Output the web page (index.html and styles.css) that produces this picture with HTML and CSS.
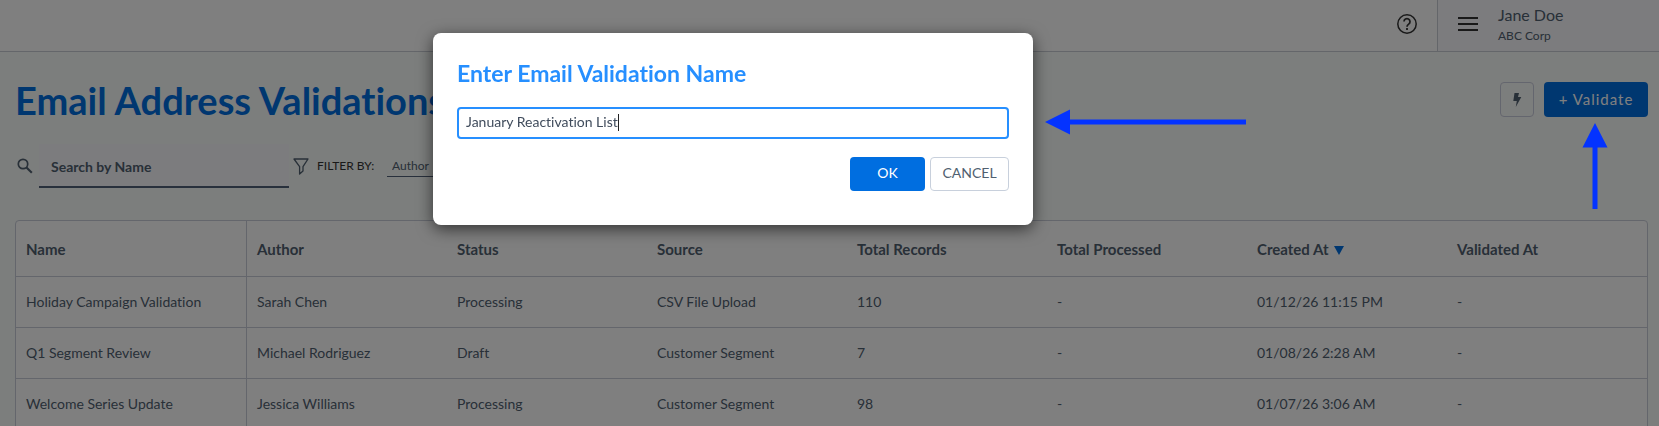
FILE: index.html
```html
<!DOCTYPE html>
<html lang="en">
<head>
	<meta charset="UTF-8">
	<meta name="viewport" content="width=device-width, initial-scale=1.0">
	<title>Email Address Validations</title>
	<link rel="stylesheet" href="styles.css">
</head>
<body>
	<header class="topbar">
		<button class="icon-btn help" type="button" aria-label="Help">
			<svg width="22" height="22" viewBox="0 0 22 22" fill="none" stroke="currentColor">
				<circle cx="11" cy="11" r="9.200" stroke-width="1.500"/>
				<path d="M8 8.600a3 3 0 1 1 4.700 2.500c-1.100.8-1.700 1.300-1.700 2.600" stroke-width="1.700"/>
				<path d="M11 15v2" stroke-width="1.800"/>
			</svg>
		</button>
		<div class="account">
			<button class="icon-btn menu" type="button" aria-label="Menu">
				<svg width="20" height="14" viewBox="0 0 20 14" fill="currentColor">
					<path d="M0 0h20v2H0zM0 6h20v2H0zM0 12h20v2H0z"/>
				</svg>
			</button>
			<div class="who">
				<div class="user">Jane Doe</div>
				<div class="company">ABC Corp</div>
			</div>
		</div>
	</header>

	<main class="content">
		<div class="heading">
			<h1>Email Address Validations</h1>
			<div class="actions">
				<button class="bolt" type="button" aria-label="Quick actions">
					<svg width="10" height="16" viewBox="0 0 10 16" fill="currentColor">
						<path d="M2.500 1H7L6 5H9.300L3.800 15 4.800 9H1.300z"/>
					</svg>
				</button>
				<button class="validate" type="button">+ Validate</button>
			</div>
		</div>

		<div class="filters">
			<label class="search-icon" for="search" aria-label="Search by Name">
				<svg width="16" height="16" viewBox="0 0 16 16" fill="none" stroke="currentColor">
					<circle cx="6" cy="6" r="4.700" stroke-width="1.700"/>
					<path d="M9.500 9.500l5.300 5.300" stroke-width="2.100"/>
				</svg>
			</label>
			<input class="search" id="search" type="text" placeholder="Search by Name">
			<svg class="funnel" width="16" height="17" viewBox="0 0 16 17" fill="none" stroke="currentColor">
				<path d="M1 1h14L10 8.600V13l-3.400 3V8.600z" stroke-width="1.300" stroke-linejoin="round"/>
			</svg>
			<label class="filter-label" for="filter">FILTER BY:</label>
			<select class="filter" id="filter">
				<option>Author</option>
			</select>
		</div>

		<div class="table-wrap">
			<table>
				<thead>
					<tr>
						<th>Name</th>
						<th>Author</th>
						<th>Status</th>
						<th>Source</th>
						<th>Total Records</th>
						<th>Total Processed</th>
						<th>Created At <svg class="sort" width="10" height="9" viewBox="0 0 10 9"><path d="M0 0h10L5 9z" fill="currentColor"/></svg></th>
						<th>Validated At</th>
					</tr>
				</thead>
				<tbody>
					<tr>
						<td>Holiday Campaign Validation</td>
						<td>Sarah Chen</td>
						<td>Processing</td>
						<td>CSV File Upload</td>
						<td>110</td>
						<td>-</td>
						<td>01/12/26 11:15 PM</td>
						<td>-</td>
					</tr>
					<tr>
						<td>Q1 Segment Review</td>
						<td>Michael Rodriguez</td>
						<td>Draft</td>
						<td>Customer Segment</td>
						<td>7</td>
						<td>-</td>
						<td>01/08/26 2:28 AM</td>
						<td>-</td>
					</tr>
					<tr>
						<td>Welcome Series Update</td>
						<td>Jessica Williams</td>
						<td>Processing</td>
						<td>Customer Segment</td>
						<td>98</td>
						<td>-</td>
						<td>01/07/26 3:06 AM</td>
						<td>-</td>
					</tr>
				</tbody>
			</table>
		</div>
	</main>

	<div class="backdrop"></div>

	<form class="modal" role="dialog" aria-labelledby="modal-title">
		<h2 id="modal-title"><label for="name">Enter Email Validation Name</label></h2>
		<div class="field">
			<input id="name" type="text" value="January Reactivation List">
			<span class="caret"></span>
		</div>
		<div class="modal-actions">
			<button class="ok" type="button">OK</button>
			<button class="cancel" type="button">CANCEL</button>
		</div>
	</form>

	<svg class="arrow arrow-left" width="202" height="26" viewBox="0 0 202 26" fill="currentColor">
		<path d="M0 13L25 0.500V10.500H201V15.500H25V25.500z"/>
	</svg>
	<svg class="arrow arrow-up" width="26" height="86" viewBox="0 0 26 86" fill="currentColor">
		<path d="M13 0L25.500 24.500H15.500V86H10.500V24.500H0.500z"/>
	</svg>
</body>
</html>
```

FILE: styles.css
```css
* {
	box-sizing: border-box;
}

body {
	margin: 0;
	min-height: 100vh;
	overflow: hidden;
	background-color: #f9fcfa;
	color: #506070;
	font-family: Lato, "Liberation Sans", sans-serif;
	font-size: 14px;
	line-height: 20px;
	font-variant-ligatures: none;
}

button, input, select {
	font: inherit;
	font-variant-ligatures: none;
	color: inherit;
}

svg {
	display: block;
}

/* top bar */
.topbar {
	display: flex;
	justify-content: flex-end;
	height: 52px;
	background-color: #fff;
	border-bottom: 1px solid #c8ccd4;
}
.icon-btn {
	border: 0;
	padding: 0;
	background: none;
	color: #333;
}
.help {
	padding: 0 19px 4px;
}
.account {
	display: flex;
	gap: 20px;
	width: 222px;
	padding: 4px 20px;
	background-color: #f9f9fd;
	border-left: 1px solid #c8ccd4;
}
.menu {
	padding-bottom: 3px;
}
.who {
	line-height: 21px;
}
.user {
	font-size: 16px;
}
.company {
	font-size: 12px;
}

/* page heading */
.content {
	padding: 30px 11px 0 15px;
}
.heading {
	display: flex;
	justify-content: space-between;
	height: 40px;
}
h1 {
	margin: 0;
	color: #006ee0;
	font-size: 38px;
	line-height: 36px;
}
.actions {
	display: flex;
	gap: 10px;
	height: 35px;
}
.bolt {
	display: flex;
	align-items: center;
	justify-content: center;
	width: 34px;
	padding: 0;
	background: none;
	border: 1px solid #c8ccdc;
	border-radius: 4px;
}
.validate {
	width: 104px;
	padding: 0 0 2px;
	border: 0;
	border-radius: 4px;
	background-color: #006ee0;
	color: #fff;
	font-size: 15px;
	letter-spacing: 1px;
}

/* search and filters */
.filters {
	display: flex;
	align-items: center;
	height: 44px;
	margin: 22px 0 32px;
}
.search-icon {
	margin: 0 6px 0 2px;
}
.search {
	width: 250px;
	height: 44px;
	padding: 2px 12px 0;
	border: 0;
	border-bottom: 2px solid #506078;
	background-color: #f9f9fd;
	font-weight: bold;
}
.search::placeholder {
	color: #506070;
	opacity: 1;
}
.funnel {
	margin: 0 8px 0 4px;
}
.filter-label {
	width: 70px;
	color: #333;
	font-size: 12px;
}
.filter {
	width: 120px;
	height: 22px;
	padding: 0 5px;
	appearance: none;
	border: 0;
	border-bottom: 1px solid #506078;
	border-radius: 0;
	background: none;
	font-size: 12px;
}

/* table */
.table-wrap {
	border: 1px solid #c8ccd8;
	border-radius: 4px;
	background-color: #fff;
	overflow: hidden;
}
table {
	width: 100%;
	table-layout: fixed;
	border-collapse: separate;
	border-spacing: 0;
}
th, td {
	height: 51px;
	padding: 0 10px;
	border-bottom: 1px solid #c8ccd8;
	text-align: left;
	white-space: nowrap;
}
th {
	width: 200px;
	height: 56px;
	font-size: 15px;
}
th:first-child {
	width: 231px;
}
th:first-child, td:first-child {
	border-right: 1px solid #c8ccd8;
}
.sort {
	display: inline-block;
	margin-left: 2px;
	color: #006ee0;
}

/* dialog */
.backdrop {
	position: fixed;
	inset: 0;
	background-color: rgba(0,0,0,0.5);
}
.modal {
	position: absolute;
	top: 33px;
	left: 433px;
	width: 600px;
	padding: 24px 24px 34px;
	border-radius: 8px;
	background-color: #fff;
	box-shadow: 0 4px 16px rgba(0,0,0,0.6);
}
h2 {
	margin: 0 0 18px;
	color: #268fff;
	font-size: 23px;
	line-height: 32px;
}
.field {
	display: flex;
	align-items: center;
	height: 32px;
	padding: 0 7px 2px;
	border: 2px solid #268fff;
	border-radius: 4px;
	color: #404c5c;
}
.field input {
	field-sizing: content;
	padding: 0;
	border: 0;
	outline: 0;
	background: none;
}
.caret {
	width: 1px;
	height: 17px;
	background-color: #222;
}
.modal-actions {
	display: flex;
	justify-content: flex-end;
	gap: 5px;
	margin-top: 18px;
}
.ok, .cancel {
	height: 34px;
	padding: 0 0 2px;
	border-radius: 4px;
}
.ok {
	width: 75px;
	border: 0;
	background-color: #006ee0;
	color: #fff;
}
.cancel {
	width: 79px;
	border: 1px solid #c8d0dc;
	background-color: #fff;
}

/* pointers */
.arrow {
	position: absolute;
	color: #0433ff;
}
.arrow-left {
	top: 109px;
	left: 1045px;
}
.arrow-up {
	top: 123px;
	right: 51px;
}
```
